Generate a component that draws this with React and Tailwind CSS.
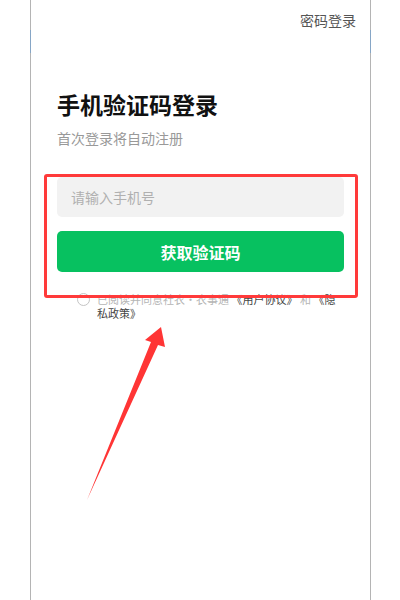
export default function App() {
  return (
    <div className="relative w-[400px] h-[600px] bg-white overflow-hidden" style={{ fontFamily: '"Noto Sans CJK SC", "Noto Sans", sans-serif' }}>
      {/* phone frame */}
      <div className="relative ml-[30px] w-[341px] h-[600px] border-x border-[#b4b4b4]">
        <div className="absolute left-[-1px] top-[30px] w-px h-[23px] bg-[#86a6c6]" />
        <div className="absolute right-[-1px] top-[30px] w-px h-[23px] bg-[#86a6c6]" />

        <div className="flex justify-end pr-[14px] pt-[10px]">
          <span className="text-[14px] leading-[20px] text-[#555]">密码登录</span>
        </div>

        <div className="px-[26px]">
          <h1 className="mt-[59px] text-[23px] leading-[30px] font-bold text-[#111]">手机验证码登录</h1>
          <p className="mt-[9px] text-[14px] leading-[20px] text-[#999]">首次登录将自动注册</p>

          <div className="mt-[29px] h-[40px] rounded-[5px] bg-[#f2f2f2] flex items-center pl-[14px]">
            <span className="text-[14px] text-[#b0b0b0]">请输入手机号</span>
          </div>

          <button className="mt-[14px] w-full h-[41px] rounded-[5px] bg-[#07c160] text-white text-[16px] font-bold">
            获取验证码
          </button>

          <div className="mt-[20px] flex items-start pl-[20px]">
            <span className="mt-[1px] w-[13px] h-[13px] shrink-0 rounded-full border border-[#c4c4c4]" />
            <p className="ml-[7px] text-[11px] leading-[14px] text-[#b5b5b5] whitespace-nowrap">
              已阅读并同意社农·农事通 <span className="text-[#444]">《用户协议》</span> 和 <span className="text-[#444]">《隐</span>
              <br />
              <span className="text-[#444]">私政策》</span>
            </p>
          </div>
        </div>
      </div>

      {/* highlight box */}
      <div className="absolute left-[44px] top-[174px] w-[314px] h-[124px] border-[3px] border-[#ff3a3a] rounded-[3px]" />

      {/* pointer arrow */}
      <svg className="absolute left-0 top-0" width="400" height="600" viewBox="0 0 400 600">
        <polygon points="161,327 165,347 158,345 87,500 151,342 145,340" fill="#ff3535" />
      </svg>
    </div>
  );
}
